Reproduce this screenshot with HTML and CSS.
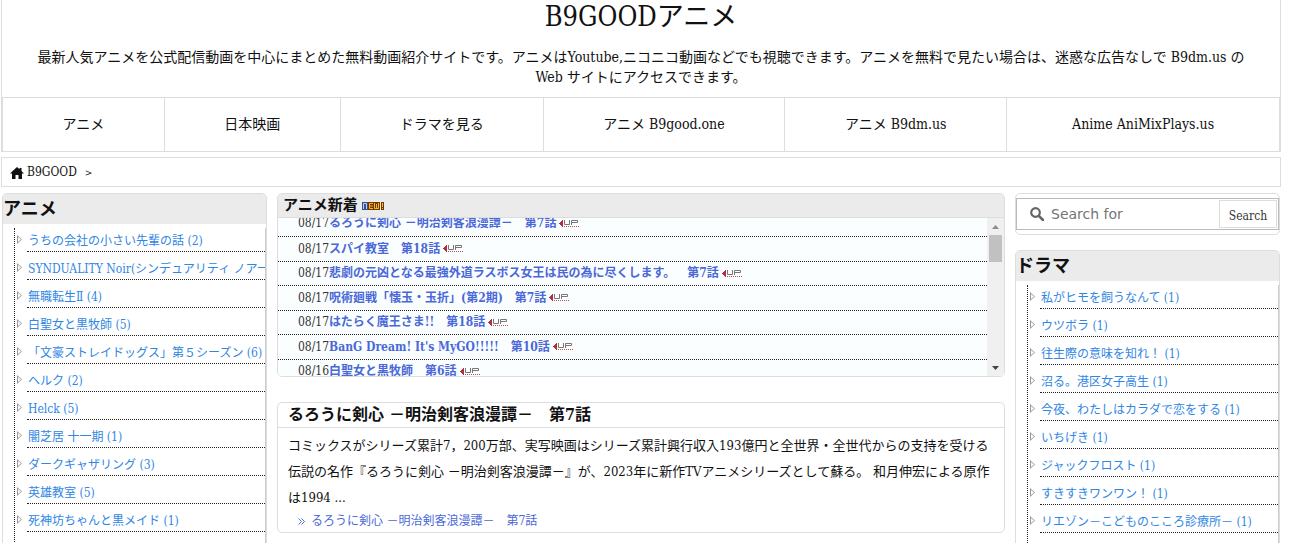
FILE: index.html
```html
<!DOCTYPE html>
<html lang="ja">
<head>
<meta charset="utf-8">
<title>B9GOODアニメ</title>
<link rel="stylesheet" href="styles.css">
</head>
<body>
<svg class="defs" aria-hidden="true">
  <symbol id="up" viewBox="0 0 20 8">
    <path d="M0 3h1v1H0zM1 2h1v3H1zM2 1h1v5H2zM3 0h1v7H3z" fill="#b03040"/>
    <path d="M5.500 0v4.500h5V0M12.500 5V.5h6v2h-6" fill="none" stroke="#777"/>
    <path d="M5 6.500h15" stroke="#c05050" stroke-dasharray="1 1"/>
  </symbol>
</svg>
<div class="page">
  <header class="header">
    <h1 class="site-title">B9GOODアニメ</h1>
    <p class="site-desc">最新人気アニメを公式配信動画を中心にまとめた無料動画紹介サイトです。アニメはYoutube,ニコニコ動画などでも視聴できます。アニメを無料で見たい場合は、迷惑な広告なしで B9dm.us の Web サイトにアクセスできます。</p>
    <nav class="nav">
      <a href="#">アニメ</a><a href="#">日本映画</a><a href="#">ドラマを見る</a><a href="#">アニメ B9good.one</a><a href="#">アニメ B9dm.us</a><a href="#">Anime AniMixPlays.us</a>
    </nav>
  </header>

  <div class="crumbs">
    <svg class="home" viewBox="0 0 14 12" aria-hidden="true"><path d="M7 0 0 6.500h2V12h3.500V8h3v4H12V6.500h2L11.500 4V1H9.500v1.300z" fill="#111"/></svg>
    <a href="#">B9GOOD</a><span class="sep">&gt;</span>
  </div>

  <div class="columns">
    <aside class="panel side">
      <h2 class="side-title">アニメ</h2>
      <ul class="links">
        <li><a href="#">うちの会社の小さい先輩の話 (2)</a></li>
        <li><a href="#">SYNDUALITY Noir(シンデュアリティ ノアール)</a></li>
        <li><a href="#">無職転生Ⅱ (4)</a></li>
        <li><a href="#">白聖女と黒牧師 (5)</a></li>
        <li><a href="#">「文豪ストレイドッグス」第５シーズン (6)</a></li>
        <li><a href="#">ヘルク (2)</a></li>
        <li><a href="#">Helck (5)</a></li>
        <li><a href="#">闇芝居 十一期 (1)</a></li>
        <li><a href="#">ダークギャザリング (3)</a></li>
        <li><a href="#">英雄教室 (5)</a></li>
        <li><a href="#">死神坊ちゃんと黒メイド (1)</a></li>
      </ul>
    </aside>

    <main class="main">
      <section class="panel">
        <h2 class="news-title">アニメ新着
          <svg class="new" viewBox="0 0 22 8" aria-label="NEW!"><path d="M0 0h6v8H0z" fill="#35508c"/><path d="M6 0h12v8H6zM19 0h3v8h-3z" fill="#713800"/><path d="M1.500 7V1.500h3V7" fill="none" stroke="#c3cfe6"/><path d="M11 1.500H7.500v5H11M7 4h4M12.500 1v5.500h4V1M14.500 2v4M20.500 1v4M20.500 6v1" fill="none" stroke="#ffb32c"/></svg>
        </h2>
        <div class="news">
          <ul class="news-list">
            <li>08/17<a href="#">るろうに剣心 －明治剣客浪漫譚－　第7話</a><svg class="up"><use href="#up"/></svg></li>
            <li>08/17<a href="#">スパイ教室　第18話</a><svg class="up"><use href="#up"/></svg></li>
            <li>08/17<a href="#">悲劇の元凶となる最強外道ラスボス女王は民の為に尽くします。　第7話</a><svg class="up"><use href="#up"/></svg></li>
            <li>08/17<a href="#">呪術廻戦「懐玉・玉折」(第2期)　第7話</a><svg class="up"><use href="#up"/></svg></li>
            <li>08/17<a href="#">はたらく魔王さま!!　第18話</a><svg class="up"><use href="#up"/></svg></li>
            <li>08/17<a href="#">BanG Dream! It's MyGO!!!!!　第10話</a><svg class="up"><use href="#up"/></svg></li>
            <li>08/16<a href="#">白聖女と黒牧師　第6話</a><svg class="up"><use href="#up"/></svg></li>
          </ul>
          <div class="scrollbar" aria-hidden="true">
            <svg viewBox="0 0 7 4"><path d="M3.500 0 7 4H0z" fill="#8c8c8c"/></svg>
            <div class="thumb"></div>
            <svg viewBox="0 0 7 4"><path d="M0 0h7L3.500 4z" fill="#444"/></svg>
          </div>
        </div>
      </section>

      <article class="panel post">
        <h2 class="post-title">るろうに剣心 －明治剣客浪漫譚－　第7話</h2>
        <p class="post-text">コミックスがシリーズ累計7，200万部、実写映画はシリーズ累計興行収入193億円と全世界・全世代からの支持を受ける伝説の名作『るろうに剣心 －明治剣客浪漫譚－』が、2023年に新作TVアニメシリーズとして蘇る。 和月伸宏による原作は1994 ...</p>
        <a class="more" href="#"><svg viewBox="0 0 7 7" aria-hidden="true"><path d="m.5.5 3 3-3 3M3.500.5l3 3-3 3" fill="none" stroke="#4a68d8"/></svg>るろうに剣心 －明治剣客浪漫譚－　第7話</a>
      </article>
    </main>

    <div class="side-col">
      <div class="panel search-panel">
        <form class="search">
          <svg viewBox="0 0 14 14" aria-hidden="true"><circle cx="5.500" cy="5.500" r="4.300" fill="none" stroke="#666" stroke-width="2.200"/><path d="m8.800 8.800 4.200 4.200" stroke="#666" stroke-width="2.600" stroke-linecap="round"/></svg>
          <input type="text" placeholder="Search for" aria-label="Search for">
          <button type="submit">Search</button>
        </form>
      </div>
      <aside class="panel side drama">
        <h2 class="side-title">ドラマ</h2>
        <ul class="links">
          <li><a href="#">私がヒモを飼うなんて (1)</a></li>
          <li><a href="#">ウツボラ (1)</a></li>
          <li><a href="#">往生際の意味を知れ！ (1)</a></li>
          <li><a href="#">沼る。港区女子高生 (1)</a></li>
          <li><a href="#">今夜、わたしはカラダで恋をする (1)</a></li>
          <li><a href="#">いちげき (1)</a></li>
          <li><a href="#">ジャックフロスト (1)</a></li>
          <li><a href="#">すきすきワンワン！ (1)</a></li>
          <li><a href="#">リエゾン－こどものこころ診療所－ (1)</a></li>
        </ul>
      </aside>
    </div>
  </div>
</div>
</body>
</html>
```

FILE: styles.css
```css
* { box-sizing: border-box; }

body {
  margin: 0;
  color: #111;
  background: #fff;
  font-family: "Roboto Slab", "DejaVu Serif Condensed", "Noto Sans CJK JP", serif;
  font-size: 14px;
  text-spacing-trim: space-all;
  overflow: hidden;
  height: 100vh;
}

h1, h2, p, ul { margin: 0; padding: 0; }
ul { list-style: none; }
a { color: inherit; text-decoration: none; }
svg { flex: none; }
.defs { display: none; }

.page { margin: 0 8px 0 1px; }

/* header */
.header {
  border: 1px solid #ddd;
  border-top: 0;
  border-bottom: 0;
}
.site-title {
  font-size: 27px;
  font-weight: 400;
  line-height: 33px;
  text-align: center;
}
.site-desc {
  padding: 14px 30px 10px;
  line-height: 20px;
  text-align: center;
}
.nav {
  display: grid;
  grid-template-columns: 161fr 176fr 203fr 242fr 222fr 273fr;
  border: 1px solid #ddd;
}
.nav a {
  line-height: 53px;
  text-align: center;
}
.nav a + a { border-left: 1px solid #ddd; }

.crumbs {
  display: flex;
  align-items: center;
  margin: 5px 0 6px;
  padding: 1px 8px 0;
  border: 1px solid #ddd;
  font-size: 12px;
  line-height: 27px;
}
.home { width: 14px; height: 12px; margin-right: 3px; }
.sep { margin-left: 8px; font-size: 10px; }

/* columns */
.columns {
  display: grid;
  grid-template-columns: 265px minmax(0, 1fr) 265px;
  gap: 10px;
  padding: 0 1px;
}
.panel {
  border: 1px solid #ddd;
  border-radius: 5px;
  overflow: hidden;
}
.side { height: 400px; }
.side-title {
  background: #ebebeb;
  font-size: 18px;
  line-height: 30px;
}
.links {
  margin: 4px 0 0 11px;
  padding-left: 12px;
  border-left: 1px dotted #222;
  border-right: 1px solid #ccc;
  height: 400px;
  font-size: 12px;
}
.links li {
  position: relative;
  padding: 7px 0 0 1px;
  border-bottom: 1px dotted #222;
  line-height: 20px;
  white-space: nowrap;
  color: #2f86e4;
}
.links li:first-child { padding-top: 3px; }
.links a { display: block; overflow: hidden; }
.links li::before {
  content: "";
  position: absolute;
  left: -10px;
  bottom: 7px;
  width: 5px;
  height: 9px;
  background: #999;
  clip-path: polygon(0 0, 100% 50%, 0 100%, 0 0, 1px 2px, 1px 7px, 4px 50%, 1px 2px);
}

/* news */
.main { display: grid; gap: 25px; align-content: start; }
.news-title {
  display: flex;
  align-items: center;
  gap: 4px;
  padding-left: 5px;
  border-bottom: 1px solid #ddd;
  background: #ebebeb;
  font-size: 15px;
  line-height: 23px;
}
.new { width: 22px; height: 8px; }
.news {
  display: flex;
  height: 158px;
  background: #fafeff;
}
.news-list { flex: 1; overflow: hidden; }
.news-list li {
  display: flex;
  align-items: center;
  height: 24px;
  padding-left: 20px;
  border-bottom: 1px dotted #222;
  font-size: 12px;
  line-height: 23px;
  white-space: nowrap;
  color: #333;
}
.news-list li:first-child { height: 19px; padding-bottom: 7px; }
.news-list li:nth-child(even) { height: 25px; }
.news-list a { color: #4a68d8; font-weight: 700; }
.up { width: 20px; height: 8px; margin-left: 3px; }
.scrollbar {
  display: flex;
  flex-direction: column;
  align-items: center;
  width: 17px;
  padding: 7px 0 6px;
  background: #f0f0f0;
}
.scrollbar svg { width: 7px; height: 4px; }
.thumb {
  width: 13px;
  height: 27px;
  margin: 6px 0 auto;
  background: #c1c1c1;
}

/* post */
.post { padding-bottom: 1px; }
.post-title {
  padding-left: 10px;
  border-bottom: 1px solid #ddd;
  font-size: 16px;
  line-height: 24px;
}
.post-text {
  padding: 5px 10px 0;
  font-size: 13px;
  line-height: 26px;
}
.more {
  display: flex;
  align-items: center;
  gap: 6px;
  padding-left: 20px;
  font-size: 12px;
  line-height: 20px;
  color: #4a68d8;
}
.more svg { width: 7px; height: 7px; }

/* right column */
.search-panel { padding: 4px 0; }
.search {
  display: flex;
  align-items: center;
  padding: 1px 1px 1px 13px;
  border: 1px solid #bbb;
}
.search svg { width: 14px; height: 14px; }
.search input {
  flex: 1;
  min-width: 0;
  padding: 0 7px;
  border: 0;
  outline: 0;
  font: 14px "DejaVu Sans", sans-serif;
}
.search input::placeholder { color: #757575; }
.search button {
  width: 58px;
  height: 28px;
  padding: 4px 0 0;
  border: 1px solid #ddd;
  background: #fff;
  color: #333;
  font-family: inherit;
  font-size: 12px;
}
.drama { margin-top: 15px; }
```
